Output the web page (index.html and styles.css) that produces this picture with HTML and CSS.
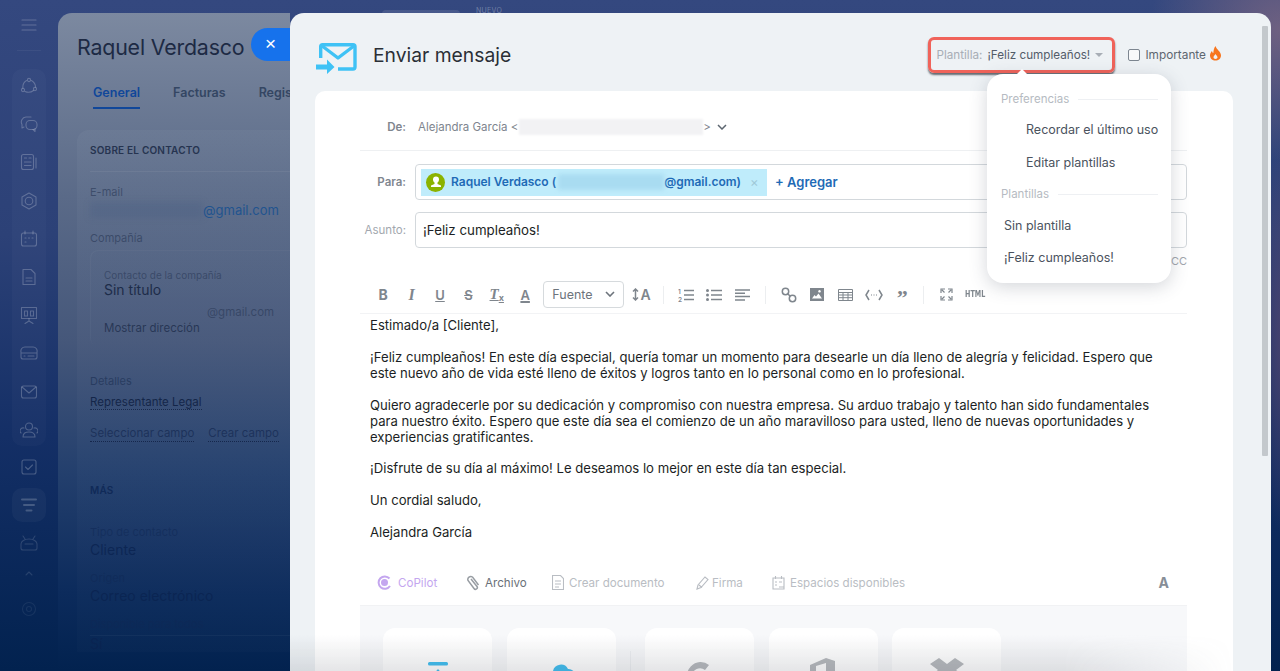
FILE: index.html
```html
<!DOCTYPE html>
<html lang="es">
<head>
<meta charset="utf-8">
<title>Enviar mensaje</title>
<link rel="stylesheet" href="styles.css">
</head>
<body>
<div class="desk">
  <div class="desk-glow"></div>
  <div class="top-pill"></div>
  <div class="top-new">NUEVO</div>

  <nav class="sidebar">
    <svg class="sb-ham" width="16" height="12" viewBox="0 0 16 12"><path d="M1 1h14M1 6h14M1 11h14"/></svg>
    <div class="sb-line"></div>
    <div class="sb-group">
      <svg width="18" height="18" viewBox="0 0 18 18"><circle cx="9" cy="3" r="1.6"/><circle cx="3" cy="13" r="1.6"/><circle cx="15" cy="12" r="1.6"/><path d="M6.500 3.500C4 5 2.600 8 2.800 11M5 14.500c3 1.300 6 1 8.500-1M15.500 10C15.500 7 14 5 11.500 3.500"/></svg>
      <svg width="18" height="18" viewBox="0 0 18 18"><path d="M11 2H6a5 5 0 0 0-4 7.500V13l2-1"/><rect x="6" y="5.500" width="11" height="9" rx="4"/><path d="M13 14.500l2 2v-3"/></svg>
      <svg width="18" height="18" viewBox="0 0 18 18"><rect x="1.500" y="1.500" width="12" height="15" rx="2"/><path d="M4.500 5h2M9 5h2M4.500 9h6.500M4.500 12.500h6.500M16 5v10"/></svg>
      <svg width="18" height="18" viewBox="0 0 18 18"><path d="M9 1l7 4v8l-7 4-7-4V5z"/><circle cx="9" cy="9" r="3.800"/></svg>
      <svg width="18" height="18" viewBox="0 0 18 18"><rect x="1.500" y="3" width="15" height="13" rx="2"/><path d="M5 1v3M13 1v3M5 8h1M8.500 8h1M12 8h1M5 12h1"/></svg>
      <svg width="18" height="18" viewBox="0 0 18 18"><path d="M3 1.500h8l4 4v11H3zM6 10h6M6 13h6"/></svg>
      <svg width="18" height="18" viewBox="0 0 18 18"><rect x="1.500" y="1.500" width="15" height="11"/><path d="M9 12.500V15l-4 2.500M9 15l4 2.500M4.500 5h3v5h-3zM10.500 5h3v5h-3z"/></svg>
      <svg width="18" height="18" viewBox="0 0 18 18"><path d="M1 8a4 4 0 0 1 4-5h8a4 4 0 0 1 4 5v5a2 2 0 0 1-2 2H3a2 2 0 0 1-2-2zM1 9h16M4 12h1M8 12h6"/></svg>
      <svg width="18" height="18" viewBox="0 0 18 18"><rect x="1.500" y="3" width="15" height="12" rx="2"/><path d="M2 4l7 6 7-6"/></svg>
      <svg width="18" height="18" viewBox="0 0 18 18"><circle cx="9" cy="5.500" r="3.500"/><path d="M3 16c0-4 2.500-5 6-5s6 1 6 5zM4 7a3 3 0 0 0-3 5M14 7a3 3 0 0 1 3 5"/></svg>
    </div>
    <svg class="sb-check" width="18" height="18" viewBox="0 0 18 18"><rect x="2" y="2" width="14" height="14" rx="2"/><path d="M5.500 9l2.500 2.500 4.500-4.500"/></svg>
    <div class="sb-active">
      <svg width="18" height="14" viewBox="0 0 18 14"><path d="M2 1.500h14M4 7h10M6.500 12.500h5"/></svg>
    </div>
    <svg class="sb-dim" width="18" height="16" viewBox="0 0 18 16"><path d="M3 1l2 3M15 1l-2 3M1 9a8 5 0 0 1 16 0v4a2 2 0 0 1-2 2H3a2 2 0 0 1-2-2zM5 9h8"/></svg>
    <svg class="sb-caret" width="8" height="5" viewBox="0 0 8 5"><path d="M1 4l3-3 3 3"/></svg>
    <svg class="sb-gear" width="16" height="16" viewBox="0 0 16 16"><circle cx="8" cy="8" r="6.500"/><circle cx="8" cy="8" r="2.500"/></svg>
  </nav>

  <section class="contact">
    <h1 class="contact-title">Raquel Verdasco</h1>
    <button class="contact-close" type="button">×</button>
    <div class="contact-tabs">
      <span class="ctab ctab-on">General</span>
      <span class="ctab">Facturas</span>
      <span class="ctab">Regis</span>
    </div>
    <div class="contact-card">
      <div class="lp-head">SOBRE EL CONTACTO</div>
      <div class="lp-label lp-first">E-mail</div>
      <div class="lp-mail"><span class="lp-blur"></span><span>@gmail.com</span></div>
      <div class="lp-label">Compañía</div>
      <div class="lp-inner">
        <div class="lp-small">Contacto de la compañía</div>
        <div class="lp-name">Sin título</div>
        <div class="lp-mail2">@gmail.com</div>
        <div class="lp-show">Mostrar dirección</div>
      </div>
      <div class="lp-label lp-details">Detalles</div>
      <div class="lp-rep"><span class="lp-dot lp-strong">Representante Legal</span></div>
      <div class="lp-links"><span class="lp-dot">Seleccionar campo</span><span class="lp-dot">Crear campo</span></div>
      <div class="lp-head lp-more">MÁS</div>
      <div class="lp-label lp-dark lp-tipo">Tipo de contacto</div>
      <div class="lp-value">Cliente</div>
      <div class="lp-label lp-dark">Origen</div>
      <div class="lp-value">Correo electrónico</div>
      <div class="lp-label lp-dark lp-rule">Disponible para todos</div>
      <div class="lp-value lp-si">Sí</div>
    </div>
  </section>

  <main class="composer">
    <header class="cmp-head">
      <svg class="cmp-logo" width="42" height="34" viewBox="0 0 42 34"><path class="lg" d="M4.700 16V4.500Q4.700 2.700 6.500 2.700h30.500Q39 2.700 39 4.500V25q0 2-2 2H22"/><path class="lg" d="M5.500 3.500L22 16 38.500 3.500"/><path class="lgf" d="M0 22.500h11v-5l7.500 7.500L11 32v-4.500H0z"/></svg>
      <h2 class="cmp-title">Enviar mensaje</h2>
      <div class="tpl-box"><span class="tpl-key">Plantilla:</span><span class="tpl-val">¡Feliz cumpleaños!</span><span class="tpl-arrow"></span></div>
      <label class="imp"><span class="imp-box"></span><span>Importante</span>
        <svg width="13" height="16" viewBox="0 0 13 16"><path d="M6.500 1C7 4 12 6.500 12 10.500 12 13.500 9.500 15.500 6.500 15.500S1 13.500 1 10.500C1 8.500 2 7 3 6c.2 1.200.7 1.800 1.300 2.200C4.500 5.500 5 3 6.500 1zM6.500 9C5.500 10.300 4.500 11 4.500 12.300c0 1 .9 1.700 2 1.700s2-.7 2-1.700C8.500 11 7.300 10.300 6.500 9z"/></svg>
      </label>
    </header>

    <div class="menu">
      <span class="menu-tip"></span>
      <div class="menu-sec">Preferencias</div>
      <div class="menu-item menu-ind">Recordar el último uso</div>
      <div class="menu-item menu-ind">Editar plantillas</div>
      <div class="menu-sec menu-sec2">Plantillas</div>
      <div class="menu-item">Sin plantilla</div>
      <div class="menu-item">¡Feliz cumpleaños!</div>
    </div>

    <div class="scrollbar"></div>

    <div class="card">
      <div class="row-from">
        <span class="lab lab-b">De:</span>
        <span class="from">Alejandra García &lt;<span class="from-blur"></span>&gt;</span>
        <svg class="from-chev" width="10" height="6" viewBox="0 0 10 6"><path d="M1 1l4 4 4-4"/></svg>
      </div>
      <div class="row-f">
        <span class="lab lab-b">Para:</span>
        <div class="fbox">
          <div class="chip">
            <span class="chip-av"><svg width="12" height="12" viewBox="0 0 12 12"><path d="M6 .5a3 3 0 0 1 3 3c0 1.500-.8 2.500-1.500 3V8l3.500 1.500V11H1V9.500L4.500 8V6.500C3.800 6 3 5 3 3.500a3 3 0 0 1 3-3z"/></svg></span>
            <span>Raquel Verdasco (</span><span class="chip-blur"></span><span>@gmail.com)</span>
            <span class="chip-x">×</span>
          </div>
          <span class="add">+ Agregar</span>
        </div>
      </div>
      <div class="row-f row-subj">
        <span class="lab">Asunto:</span>
        <div class="fbox fbox-subj">¡Feliz cumpleaños!</div>
      </div>
      <div class="cc">CC</div>

      <div class="toolbar">
        <span class="tb tb-b">B</span>
        <span class="tb tb-i">I</span>
        <span class="tb tb-u">U</span>
        <span class="tb tb-s">S</span>
        <span class="tb tb-t">T<small>x</small></span>
        <span class="tb tb-a">A</span>
        <span class="tb-select">Fuente<svg width="10" height="6" viewBox="0 0 10 6"><path d="M1 1l4 4 4-4"/></svg></span>
        <span class="tb tb-size"><svg width="7" height="13" viewBox="0 0 7 13"><path d="M3.500 1v11M1 3.500L3.500 1 6 3.500M1 9.500L3.500 12 6 9.500"/></svg>A</span>
        <span class="tb-sep"></span>
        <span class="tb"><svg width="16" height="14" viewBox="0 0 16 14"><path d="M6 2.500h10M6 7h10M6 11.500h10"/><text x="0" y="6" class="ol">1</text><text x="0" y="13.500" class="ol">2</text></svg></span>
        <span class="tb"><svg width="16" height="12" viewBox="0 0 16 12"><path d="M5 1.500h11M5 6h11M5 10.500h11"/><circle class="fl" cx="1.500" cy="1.500" r="1.500"/><circle class="fl" cx="1.500" cy="6" r="1.500"/><circle class="fl" cx="1.500" cy="10.500" r="1.500"/></svg></span>
        <span class="tb"><svg width="15" height="12" viewBox="0 0 15 12"><path d="M0 1h15M0 4.300h10M0 7.600h15M0 11h10"/></svg></span>
        <span class="tb-sep tb-sep2"></span>
        <span class="tb"><svg width="16" height="16" viewBox="0 0 16 16"><circle cx="4.500" cy="4.500" r="3.200"/><circle cx="11.500" cy="11.500" r="3.200"/><path d="M6.500 6.500l3 3"/></svg></span>
        <span class="tb"><svg width="14" height="13" viewBox="0 0 14 13"><path class="fl" fill-rule="evenodd" d="M0 0h14v13H0zM2 10.500h10L8.500 5.500 6 8.500 4.500 7zM9.500 2a1.300 1.300 0 1 0 .01 0z"/></svg></span>
        <span class="tb"><svg width="15" height="12" viewBox="0 0 15 12"><path class="thin" d="M.5.500h14v11H.500zM.5 3.500h14M.5 6h14M.5 8.700h14M5 3.500v8M10 3.500v8"/></svg></span>
        <span class="tb"><svg width="18" height="12" viewBox="0 0 18 12"><path d="M4 1L1 6l3 5M14 1l3 5-3 5"/><path class="dots" d="M6 6h1M8.500 6h1M11 6h1"/></svg></span>
        <span class="tb tb-q">”</span>
        <span class="tb-sep tb-sep3"></span>
        <span class="tb"><svg width="13" height="13" viewBox="0 0 13 13"><path class="thin2" d="M1 5V1h4M2 2l2.500 2.500M8 1h4v4M11 2L8.500 4.500M1 8v4h4M2 11l2.500-2.500M12 8v4H8M11 11L8.500 8.500"/></svg></span>
        <span class="tb tb-html">HTML</span>
      </div>

      <div class="body-text">
        <p>Estimado/a [Cliente],</p>
        <p>¡Feliz cumpleaños! En este día especial, quería tomar un momento para desearle un día lleno de alegría y felicidad. Espero que<br>este nuevo año de vida esté lleno de éxitos y logros tanto en lo personal como en lo profesional.</p>
        <p>Quiero agradecerle por su dedicación y compromiso con nuestra empresa. Su arduo trabajo y talento han sido fundamentales<br>para nuestro éxito. Espero que este día sea el comienzo de un año maravilloso para usted, lleno de nuevas oportunidades y<br>experiencias gratificantes.</p>
        <p>¡Disfrute de su día al máximo! Le deseamos lo mejor en este día tan especial.</p>
        <p>Un cordial saludo,</p>
        <p>Alejandra García</p>
      </div>

      <div class="actions">
        <span class="act act-co"><svg width="15" height="15" viewBox="0 0 15 15"><path d="M12.500 3.500A6.200 6.200 0 1 0 13 11"/><circle class="fl" cx="7.500" cy="7.500" r="3.500"/></svg>CoPilot</span>
        <span class="act act-ar"><svg width="14" height="16" viewBox="0 0 14 16"><path d="M5 4l6 7.500a1.800 1.800 0 0 1-3 2L2 5.500A3 3 0 0 1 6.500 2l6 8"/></svg>Archivo</span>
        <span class="act act-cd"><svg width="12" height="15" viewBox="0 0 12 15"><path d="M.5.500h8l3 3v11H.500zM3 6h6M3 9h6M3 12h4"/></svg>Crear documento</span>
        <span class="act act-fi"><svg width="13" height="14" viewBox="0 0 13 14"><path d="M1 13l1-4 7-8 3 2.500-7 8zM3 9l3 2.500"/></svg>Firma</span>
        <span class="act act-es"><svg width="13" height="15" viewBox="0 0 13 15"><path d="M1 3h11v11H1zM3.500 1v3M9.500 1v3M3 7h2M7 7h3M3 10h2M7 12h5"/></svg>Espacios disponibles</span>
        <span class="act-a">A</span>
      </div>

      <div class="tiles">
        <div class="tile"><svg width="22" height="40" viewBox="0 0 22 40"><rect class="t-blue" x="1" y="0" width="20" height="3.500" rx="1.500"/><path class="t-blue" d="M11 7l7 8h-4v12H8V15H4z"/></svg></div>
        <div class="tile"><svg width="26" height="30" viewBox="0 3 26 30"><path class="t-blue" d="M6 24a6 6 0 0 1-1-12 8 8 0 0 1 15-2 7 7 0 0 1 1 14z"/></svg></div>
        <span class="tile-sep"></span>
        <div class="tile"><svg width="26" height="30" viewBox="0 0 26 30"><path class="t-grey" d="M13 0a14 14 0 0 1 9 3l-4 5a8 8 0 0 0-13 6v16H0V14A14 14 0 0 1 13 0z"/></svg></div>
        <div class="tile"><svg class="t-up" width="28" height="30" viewBox="0 0 26 30"><path class="t-grey" d="M0 7L16 0l9 3v24l-9 3-16-5 16 2V5L6 8v14l-6 3z"/></svg></div>
        <div class="tile"><svg class="t-up" width="34" height="30" viewBox="0 0 34 30"><path class="t-grey" d="M9 0l8 6 8-6 9 6-8 6 8 6-9 6-8-6-8 6-9-6 8-6-8-6z"/></svg></div>
      </div>
    </div>
    <div class="fade"></div>
  </main>
</div>
</body>
</html>
```
FILE: styles.css
```css
* { box-sizing: border-box; }
html, body { margin: 0; height: 100%; overflow: hidden; }
body { font-family: Inter, "Liberation Sans", sans-serif; }
p, h1, h2 { margin: 0; font-weight: 400; }

.desk {
  position: relative;
  width: 1280px;
  height: 671px;
  overflow: hidden;
  background: linear-gradient(180deg, #34487f 0%, #2c4177 35%, #142f66 65%, #02224f 100%);
}
.desk-glow {
  position: absolute;
  inset: 0;
  background:
    radial-gradient(ellipse 130px 130px at 1280px 30px, rgba(130, 105, 130, .75), transparent),
    radial-gradient(ellipse 40px 200px at 1290px 340px, rgba(90, 70, 110, .8), transparent);
}
.top-pill {
  position: absolute;
  left: 382px;
  top: 10px;
  width: 78px;
  height: 8px;
  border-radius: 6px;
  background: rgba(255, 255, 255, .1);
}
.top-new {
  position: absolute;
  left: 476px;
  top: 7px;
  font-size: 7px;
  line-height: 8px;
  letter-spacing: .3px;
  color: rgba(255, 255, 255, .3);
}

/* sidebar */
.sidebar {
  position: absolute;
  left: 0;
  top: 0;
  width: 58px;
  height: 671px;
  display: flex;
  flex-direction: column;
  align-items: center;
}
.sidebar svg { fill: none; stroke: rgba(255, 255, 255, .23); stroke-width: 1.1; stroke-linecap: round; stroke-linejoin: round; flex: none; }
.sb-ham { margin-top: 19px; }
.sb-line { width: 24px; height: 1px; margin-top: 19px; background: rgba(255, 255, 255, .05); }
.sb-group {
  width: 34px;
  height: 377px;
  margin-top: 18px;
  padding-top: 8px;
  border-radius: 10px;
  background: rgba(255, 255, 255, .025);
  display: flex;
  flex-direction: column;
  align-items: center;
  gap: 20.200px;
}
.sb-check { margin-top: 12px; }
.sb-active {
  width: 34px;
  height: 34px;
  margin-top: 12px;
  border-radius: 10px;
  background: rgba(255, 255, 255, .035);
  display: flex;
  align-items: center;
  justify-content: center;
}
.sidebar .sb-active svg { stroke: rgba(255, 255, 255, .2); stroke-width: 2; }
.sidebar .sb-dim { margin-top: 13px; stroke: rgba(255, 255, 255, .14); }
.sidebar .sb-caret { margin-top: 20px; stroke: rgba(255, 255, 255, .12); }
.sidebar .sb-gear { margin-top: 25px; stroke: rgba(255, 255, 255, .07); }

/* contact panel behind */
.contact {
  position: absolute;
  left: 58px;
  top: 13px;
  width: 232px;
  height: 658px;
  padding: 17px 0 0 19px;
  border-radius: 14px 0 0 0;
  overflow: hidden;
  background: linear-gradient(180deg, #7c89a0 0%, #5a6a88 28%, #45577a 50%, #233f6d 70%, #0c2b5c 88%, #02224f 100%);
  color: #1c2a47;
}
.contact-title { font-size: 21.400px; line-height: 34px; white-space: nowrap; letter-spacing: -.2px; color: #1d2a44; }
.contact-close {
  position: absolute;
  left: 193px;
  top: 15px;
  width: 60px;
  height: 33px;
  padding: 0 21px 2px 0;
  border: 0;
  border-radius: 17px;
  background: #1672ec;
  color: #fff;
  font: 400 19px/30px "Liberation Sans", sans-serif;
}
.contact-tabs { display: flex; gap: 33px; margin: 21px 0 0 16px; white-space: nowrap; }
.ctab { font-size: 12.500px; font-weight: 600; line-height: 16px; padding-bottom: 8px; color: #344663; }
.ctab-on { color: #10479a; border-bottom: 2px solid #10479a; padding-bottom: 6px; }
.contact-card {
  width: 240px;
  margin-top: 21px;
  padding: 12px 0 0 13px;
  border-radius: 12px 0 0 0;
  background: linear-gradient(180deg, rgba(255, 255, 255, .035), rgba(255, 255, 255, .01));
  font-size: 11.500px;
  line-height: 16px;
  white-space: nowrap;
}
.lp-head { font-size: 10px; font-weight: 600; letter-spacing: .2px; color: #263450; padding-bottom: 13px; border-bottom: 1px solid rgba(255, 255, 255, .06); }
.lp-label { margin-top: 12px; font-size: 11px; color: rgba(40, 55, 85, .62); }
.lp-first { margin-top: 12px; }
.lp-mail { margin-top: 2px; display: flex; font-size: 13px; color: #22548f; }
.lp-blur { width: 113px; height: 16px; background: rgba(60, 85, 125, .2); filter: blur(3px); }
.lp-inner {
  width: 230px;
  height: 96px;
  margin-top: 4px;
  padding: 18px 0 0 14px;
  border-radius: 8px 0 0 8px;
  box-shadow: inset 1px 1px 0 rgba(255, 255, 255, .03);
}
.lp-small { font-size: 10px; line-height: 14px; color: rgba(40, 55, 85, .6); }
.lp-name { font-size: 14px; color: #1d2c49; }
.lp-mail2 { margin: 6px 0 0 103px; color: rgba(40, 55, 85, .6); }
.lp-show { color: rgba(30, 45, 75, .8); }
.lp-details { margin-top: 27px; color: rgba(20, 40, 75, .55); }
.lp-rep { margin-top: 5px; color: #142649; }
.lp-dot { border-bottom: 1px dotted rgba(10, 25, 60, .7); }
.lp-strong { padding-bottom: 0; }
.lp-links { margin-top: 15px; display: flex; gap: 14px; color: rgba(15, 35, 75, .62); }
.lp-more { margin-top: 40px; padding-bottom: 0; border: 0; color: #102a58; }
.lp-tipo { margin-top: 26px; }
.lp-dark { color: rgba(15, 40, 85, .55); }
.lp-value { margin-top: 2px; font-size: 14px; color: rgba(10, 35, 80, .8); }
.lp-rule { padding-bottom: 3px; border-bottom: 1px solid rgba(255, 255, 255, .04); }
.lp-si { margin-top: 0; }

/* composer */
.composer {
  position: absolute;
  left: 290px;
  top: 13px;
  width: 981px;
  height: 658px;
  padding: 0 38px 0 25px;
  border-radius: 14px 14px 0 0;
  overflow: hidden;
  background: #eef2f5;
  color: #1c1f24;
}
.cmp-head { position: relative; display: flex; align-items: center; height: 78px; padding: 6px 11px 0 1px; }
.cmp-logo { margin-top: 8px; flex: none; }
.lg { fill: none; stroke: #3fc2f5; stroke-width: 3.400; stroke-linejoin: round; }
.lgf { fill: #3fc2f5; }
.cmp-title { margin-left: 15px; font-size: 19.300px; line-height: 28px; color: #2a2f36; white-space: nowrap; }
.tpl-box {
  margin-left: auto;
  width: 187px;
  height: 36px;
  padding-left: 5px;
  display: flex;
  align-items: center;
  font-size: 11.700px;
  white-space: nowrap;
  border: 3px solid #f0635a;
  border-radius: 6px;
  box-shadow: 0 2px 2px rgba(40, 45, 55, .7);
}
.tpl-key { color: #a8aeb6; }
.tpl-val { margin-left: 5px; color: #535c69; }
.tpl-arrow { margin-left: 5px; width: 0; height: 0; border: 4px solid transparent; border-top-color: #a8aeb6; border-bottom: 0; }
.imp { margin-left: 13px; display: flex; align-items: center; font-size: 11.800px; color: #5d6670; white-space: nowrap; }
.imp-box { width: 12px; height: 12px; margin-right: 5px; border: 1px solid #7d8690; border-radius: 2px; background: #f8f9fa; }
.imp svg { margin-left: 3px; margin-top: -4px; fill: #f7761f; }

.menu {
  position: absolute;
  z-index: 5;
  left: 697px;
  top: 61px;
  width: 184px;
  height: 209px;
  padding: 17px 13px 0 14px;
  border-radius: 16px;
  background: #fff;
  box-shadow: 0 4px 18px rgba(60, 70, 85, .22);
  font-size: 12.500px;
  color: #4b535e;
  white-space: nowrap;
}
.menu-tip {
  position: absolute;
  left: 29px;
  top: -5px;
  width: 0;
  height: 0;
  border: 6px solid transparent;
  border-top: 0;
  border-bottom: 6px solid #fff;
}
.menu-sec { display: flex; align-items: center; gap: 9px; height: 16px; font-size: 11.500px; color: #b6bbc2; }
.menu-sec::after { content: ""; flex: 1; height: 1px; background: #eef0f3; }
.menu-sec2 { margin-top: 7px; }
.menu-item { height: 32.500px; padding: 0 0 0 3px; display: flex; align-items: center; }
.menu-sec + .menu-ind { margin-top: 6px; }
.menu-sec2 + .menu-item { margin-top: 7px; }
.menu-ind { padding-left: 25px; height: 33px; }

.scrollbar {
  position: absolute;
  right: 3px;
  top: 13px;
  width: 6px;
  height: 430px;
  border-radius: 1px;
  background: #c3c8cc;
}

.card {
  width: 918px;
  height: 600px;
  padding: 13px 46px 0 45px;
  border-radius: 10px 10px 0 0;
  background: #fff;
}
.row-from {
  display: flex;
  align-items: center;
  height: 47px;
  padding-bottom: 1px;
  border-bottom: 1px solid #eef0f2;
  font-size: 11.500px;
}
.lab { flex: none; width: 46px; text-align: right; font-size: 11.500px; color: #a2a7ae; white-space: nowrap; }
.lab-b { font-weight: 600; color: #7f868f; }
.from { margin-left: 12px; display: flex; align-items: center; color: #7e858e; white-space: nowrap; }
.from-blur { width: 184px; height: 16px; margin-left: 1px; background: #f2f2f4; filter: blur(1px); }
.from-chev { margin-left: 6px; fill: none; stroke: #5d6670; stroke-width: 1.500; }
.row-f { display: flex; align-items: center; margin-top: 13px; }
.row-subj { margin-top: 12px; }
.fbox {
  flex: none;
  width: 772px;
  height: 36px;
  margin-left: 9px;
  padding-left: 5px;
  display: flex;
  align-items: center;
  border: 1px solid #d3d8dc;
  border-radius: 4px;
}
.fbox-subj { padding-left: 7px; font-size: 13.300px; color: #1c1f24; }
.chip {
  width: 346px;
  height: 27px;
  padding: 0 0 1px 5px;
  display: flex;
  align-items: center;
  background: #bfecfb;
  font-size: 12px;
  font-weight: 600;
  color: #1e6ab6;
  white-space: nowrap;
}
.chip-av {
  width: 19px;
  height: 19px;
  margin: 1px 6px 0 0;
  border-radius: 50%;
  background: #8bb300;
  display: flex;
  align-items: center;
  justify-content: center;
}
.chip-av svg { fill: #fff; }
.chip-blur { width: 106px; height: 16px; margin-left: 2px; background: #a9dcf1; filter: blur(2px); }
.chip-x { margin-left: 9px; font-size: 13px; font-weight: 400; color: #9fc9d8; }
.add { margin-left: 8px; padding-bottom: 1px; font-size: 13px; font-weight: 600; color: #1e6ab6; white-space: nowrap; }
.cc { height: 21px; padding: 3px 0 0 0; text-align: right; font-size: 11px; line-height: 20px; color: #a2a7ae; }

.toolbar {
  position: relative;
  display: flex;
  align-items: center;
  height: 45px;
  padding: 12px 0 5px 9px;
  border-bottom: 1px solid #f2f3f5;
}
.tb {
  flex: none;
  width: 28.400px;
  height: 20px;
  display: flex;
  align-items: center;
  justify-content: center;
  font-size: 14px;
  color: #7f868d;
  white-space: nowrap;
}
.tb svg { fill: none; stroke: #7f868d; stroke-width: 1.500; }
.tb-b { font-weight: 700; font-size: 14px; }
.tb-i { font-family: "Liberation Serif", serif; font-style: italic; font-weight: 700; font-size: 16px; }
.tb-u { text-decoration: underline; font-size: 13px; font-weight: 600; }
.tb-s { text-decoration: line-through; font-size: 13px; font-weight: 600; }
.tb-t { font-family: "Liberation Serif", serif; font-style: italic; font-weight: 700; font-size: 15px; text-decoration: underline; }
.tb-t small { font-size: 9px; font-style: normal; font-family: Inter, sans-serif; margin-top: 6px; }
.tb-a { font-size: 13px; font-weight: 600; text-decoration: underline; text-decoration-thickness: 2px; }
.tb-select {
  flex: none;
  width: 81px;
  height: 27px;
  margin-left: 4px;
  padding: 0 8px 1px 8px;
  display: flex;
  align-items: center;
  justify-content: space-between;
  border: 1px solid #d6dadd;
  border-radius: 4px;
  font-size: 12.500px;
  color: #6d747c;
}
.tb-select svg { fill: none; stroke: #6d747c; stroke-width: 1.600; }
.tb-size { margin-left: 3px; gap: 1px; font-weight: 600; font-size: 14px; }
.tb-sep { flex: none; width: 1px; height: 18px; margin: 0 8px 0 7px; background: #eceef0; }
.tb-sep2 { margin: 0 8.500px 0 8px; }
.tb-sep3 { margin: 0 8px 0 7px; }
.ol { font: 600 6.500px Inter, sans-serif; fill: #7f868d; stroke: none; }
.tb .fl { fill: #7f868d; stroke: none; }
.tb .thin { stroke-width: 1; }
.tb .thin2 { stroke-width: 1.200; }
.tb .dots { stroke-width: 1.200; }
.tb-q { font-family: "Liberation Serif", serif; font-weight: 700; font-size: 22px; line-height: 20px; padding-top: 7px; }
.tb-html { font-family: "DejaVu Sans", sans-serif; font-size: 8px; font-weight: 700; transform: scaleX(.8); }

.body-text { padding: 3px 0 0 10px; font-size: 13.120px; line-height: 16px; color: #1c1f24; white-space: nowrap; }
.body-text p + p { margin-top: 16px; }
.body-text p:nth-child(4) { margin-top: 15px; }

.actions {
  position: relative;
  display: flex;
  align-items: center;
  height: 46px;
  margin-top: 20px;
  padding: 0 17px;
  border-bottom: 1px solid #f1f2f4;
  font-size: 11.600px;
  white-space: nowrap;
}
.act { display: flex; align-items: center; }
.act svg { margin-right: 5px; fill: none; stroke: currentColor; stroke-width: 1.100; }
.act-co { color: #c4a6ef; width: 89px; }
.act-co svg { margin-right: 6px; stroke-width: 2; }
.act-co .fl { fill: currentColor; stroke: none; }
.act-ar { color: #6a7078; width: 86px; }
.act-ar svg { stroke: #989da3; stroke-width: 1.500; }
.act-cd { color: #b9bdc3; width: 144px; }
.act-fi { color: #b9bdc3; width: 76px; }
.act-fi svg { margin-right: 3px; }
.act-es { color: #b9bdc3; }
.act-a { margin-left: auto; margin-right: 1px; font-size: 14px; font-weight: 700; color: #878e97; }

.tiles {
  display: flex;
  height: 100px;
  padding: 22px 0 0 23px;
  background: #f7f8fa;
}
.tile {
  flex: none;
  width: 109px;
  height: 90px;
  margin-right: 14.500px;
  padding-top: 34px;
  display: flex;
  justify-content: center;
  border-radius: 12px;
  background: #fff;
}
.tile-sep { flex: none; width: 1px; height: 60px; margin: 23px 14px 0 0; background: #eceef1; }
.t-blue { fill: #3bbdf0; }
.t-grey { fill: #b5b8bc; }
.t-up { margin-top: -4px; }

.fade {
  position: absolute;
  left: 0;
  right: 38px;
  bottom: 0;
  height: 36px;
  background: linear-gradient(180deg, rgba(90, 95, 105, 0), rgba(90, 95, 105, .16));
  -webkit-mask-image: linear-gradient(90deg, #000 82%, transparent);
  mask-image: linear-gradient(90deg, #000 82%, transparent);
  pointer-events: none;
}
```
